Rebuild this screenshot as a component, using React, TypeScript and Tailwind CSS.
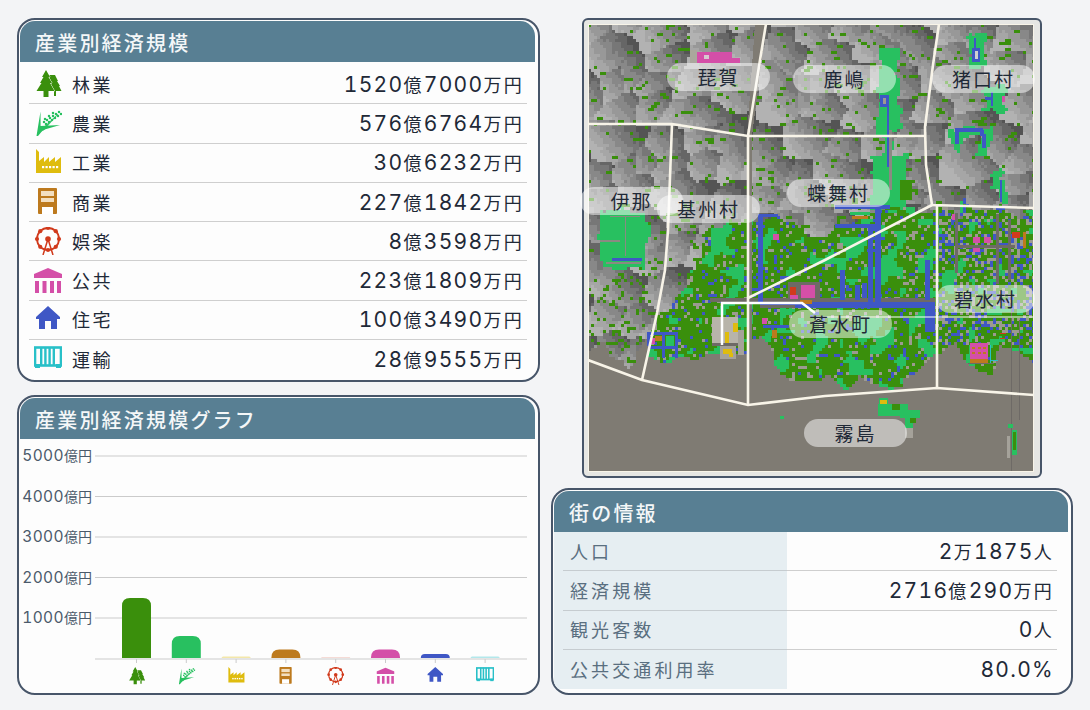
import React, { useMemo } from "react";

const C = {
  green: "#3a8f0c",
  mint: "#28c060",
  yellow: "#dfbc0e",
  brown: "#bd7a1e",
  red: "#d13a1c",
  pink: "#d44fa8",
  blue: "#3f57c5",
  cyan: "#28c0c8",
  taupe: "#7f7b73",
  cream: "#f8f4e8",
};

// all icons are drawn on a 28x28 box
const TreeIcon = () => (
  <>
    <path d="M21 5L24 11H23L26 16H25L27.5 21H22V26H20V21H15V5Z" fill={C.green} />
    <path
      d="M12 0L16 7H14.5L18 13H16L20.5 21H14.5V27H9.5V21H2.5L7.5 13H6L9.5 7H8Z"
      fill={C.green}
      stroke="#fff"
      strokeWidth="1"
      paintOrder="stroke"
    />
  </>
);

const WheatIcon = () => (
  <>
    <path d="M2.5 27L6.5 2.5L6.6 17L26 16L9 21L4 27Z" fill={C.mint} />
    <path d="M5 23L8 20L24 5L10 21Z" fill={C.mint} stroke={C.mint} strokeWidth="0.5" />
    {[
      [10, 13],
      [13, 11],
      [16, 9],
      [19, 7],
      [22, 5],
      [25, 3],
      [12, 15],
      [15, 13],
      [18, 11],
      [21, 9],
      [24, 7],
      [27, 5],
      [11, 10],
      [15, 7],
      [19, 4],
    ].map(([x, y]) => (
      <rect key={`${x}-${y}`} x={x - 1.1} y={y - 1.1} width="2.2" height="2.2" fill={C.mint} />
    ))}
  </>
);

const FactoryIcon = () => (
  <>
    <path d="M2 0L5 3V12L10 8V13L15 8V13L21 8V13L27 8V24H2Z" fill={C.yellow} />
    {[8, 11.5, 15, 18.5, 22].map((x) => (
      <rect key={x} x={x} y="17" width="2.2" height="2.2" fill="#fff" />
    ))}
  </>
);

const ShopIcon = () => (
  <>
    <rect x="4" y="0" width="19" height="26" rx="1" fill={C.brown} />
    <rect x="7" y="3" width="13" height="5" fill="#f3dfc0" />
    <rect x="7" y="10" width="13" height="4" fill="#f3dfc0" />
    <rect x="8" y="19" width="11" height="7" fill="#fff" />
  </>
);

const FerrisIcon = () => (
  <g stroke={C.red} fill={C.red}>
    <circle cx="14" cy="12" r="11" fill="none" strokeWidth="1.8" />
    {[0, 45, 90, 135, 180, 225, 270, 315].map((a) => (
      <circle
        key={a}
        cx={14 + 11 * Math.cos((a * Math.PI) / 180)}
        cy={12 + 11 * Math.sin((a * Math.PI) / 180)}
        r="2.1"
        strokeWidth="0"
      />
    ))}
    <circle cx="14" cy="12" r="2.8" strokeWidth="0" />
    <path d="M14 12L9 28M14 12L19 28" strokeWidth="1.5" fill="none" />
  </g>
);

const CivicIcon = () => (
  <>
    <path d="M14 1L28 7V11H0V7Z" fill={C.pink} />
    {[1, 8.5, 16, 23].map((x) => (
      <rect key={x} x={x} y="14" width="4" height="12" fill={C.pink} />
    ))}
  </>
);

const HouseIcon = () => (
  <path d="M14 0L26 11V13H23V23H17V15H11V23H5V13H2V11Z" fill={C.blue} />
);

const RailIcon = () => (
  <>
    <rect x="1" y="1.5" width="26" height="18" fill="none" stroke={C.cyan} strokeWidth="2.6" />
    {[6, 10.2, 14.4, 18.6].map((x) => (
      <rect key={x} x={x} y="1" width="2.4" height="18" fill={C.cyan} />
    ))}
    <rect x="1" y="18" width="5" height="4" fill={C.cyan} />
    <rect x="22" y="18" width="5" height="4" fill={C.cyan} />
  </>
);

const industries = [
  { name: "林業", value: "1520億7000万円", icon: <TreeIcon />, color: C.green, bar: 60 },
  { name: "農業", value: "576億6764万円", icon: <WheatIcon />, color: C.mint, bar: 22 },
  { name: "工業", value: "30億6232万円", icon: <FactoryIcon />, color: C.yellow, bar: 1.5 },
  { name: "商業", value: "227億1842万円", icon: <ShopIcon />, color: C.brown, bar: 8.5 },
  { name: "娯楽", value: "8億3598万円", icon: <FerrisIcon />, color: C.red, bar: 0.6 },
  { name: "公共", value: "223億1809万円", icon: <CivicIcon />, color: C.pink, bar: 8.5 },
  { name: "住宅", value: "100億3490万円", icon: <HouseIcon />, color: C.blue, bar: 4 },
  { name: "運輸", value: "28億9555万円", icon: <RailIcon />, color: C.cyan, bar: 1.5 },
];

const townInfo = [
  ["人口", "2万1875人"],
  ["経済規模", "2716億290万円"],
  ["観光客数", "0人"],
  ["公共交通利用率", "80.0%"],
];

const labels = [
  { text: "琵賀", left: 83, top: 43 },
  { text: "鹿嶋", left: 209, top: 45 },
  { text: "猪口村", left: 348, top: 45 },
  { text: "伊那", left: -4, top: 167 },
  { text: "基州村", left: 73, top: 175 },
  { text: "蝶舞村", left: 203, top: 159 },
  { text: "碧水村", left: 352, top: 265, width: "w-[99px]" },
  { text: "蒼水町", left: 205, top: 290 },
  { text: "霧島", left: 220, top: 399 },
];

// digits are wider and more open than the kanji around them
const Amount = ({ text }: { text: string }) => (
  <span className="text-[18px] leading-none tracking-[2.3px]">
    {text.split(/([0-9.%]+)/).map((part, i) =>
      i % 2 === 1 ? (
        <span key={i} className="font-['Inter'] text-[21px] tracking-[1.3px] tabular-nums">
          {part}
        </span>
      ) : (
        <span key={i}>{part}</span>
      )
    )}
  </span>
);

const Panel = ({ title, className, children }: { title: string; className: string; children: React.ReactNode }) => (
  <div className={`overflow-hidden rounded-[18px] border-2 border-[#475569] bg-[#fdfdfd] pb-px pl-px pr-[3px] pt-px ${className}`}>
    <div className="h-[41px] rounded-t-[15px] bg-[#587f93] pl-[15px] text-[20px] font-medium leading-[43px] tracking-[2.2px] text-[#f4f7f8]">
      {title}
    </div>
    {children}
  </div>
);

const hash = (x: number, y: number, s = 0) => {
  const v = Math.sin(x * 127.1 + y * 311.7 + s * 74.7) * 43758.5453;
  return v - Math.floor(v);
};

const smooth = (x: number, y: number, size: number, s: number) => {
  const gx = Math.floor(x / size);
  const gy = Math.floor(y / size);
  const fx = x / size - gx;
  const fy = y / size - gy;
  const a = hash(gx, gy, s);
  const b = hash(gx + 1, gy, s);
  const c = hash(gx, gy + 1, s);
  const d = hash(gx + 1, gy + 1, s);
  return (a * (1 - fx) + b * fx) * (1 - fy) + (c * (1 - fx) + d * fx) * fy;
};

const interp = (pts: number[][], x: number) => {
  for (let i = 0; i < pts.length - 1; i++) {
    if (x <= pts[i + 1][0]) {
      const t = (x - pts[i][0]) / (pts[i + 1][0] - pts[i][0]);
      return pts[i][1] + (pts[i + 1][1] - pts[i][1]) * t;
    }
  }
  return pts[pts.length - 1][1];
};

const shorePts = [
  [588, 350], [602, 333], [608, 357], [628, 367], [638, 350], [645, 340], [648, 357], [685, 360],
  [708, 347], [738, 350], [745, 345], [758, 333], [772, 357], [785, 377], [825, 373], [845, 393],
  [858, 377], [888, 390], [905, 377], [935, 353], [955, 340], [965, 363], [992, 370], [998, 343],
  [1021, 353], [1034, 360],
];

const cityPts = [
  [588, 600], [640, 600], [645, 335], [658, 313], [682, 283], [698, 260], [705, 237], [718, 223],
  [745, 215], [752, 217], [775, 210], [808, 237], [830, 230], [870, 210], [900, 207], [932, 207], [1034, 208],
];

const greys = ["#545454", "#666666", "#777777", "#888888", "#989898", "#a6a6a6", "#b2b2b2"];

// hill shading: nearest jittered point, dark above and light below each peak
const hillShade = (x: number, y: number) => {
  const size = 30;
  const sx = x + y * 0.5;
  const gx = Math.floor(sx / size);
  const gy = Math.floor(y / size);
  let best = 1e9;
  let dx = 0;
  let dy = 0;
  for (let i = -1; i <= 1; i++) {
    for (let j = -1; j <= 1; j++) {
      const px = (gx + i + hash(gx + i, gy + j, 1)) * size;
      const py = (gy + j + hash(gx + i, gy + j, 2)) * size;
      const d = (sx - px) ** 2 + (y - py) ** 2;
      if (d < best) {
        best = d;
        dx = sx - px;
        dy = y - py;
      }
    }
  }
  const v = 3.2 + dy * 0.13 - dx * 0.09 + (hash(x, y, 3) - 0.5) * 0.6;
  return greys[Math.max(0, Math.min(6, Math.round(v)))];
};

const blobs: number[][] = [
  // mint areas, x y w h
  [598, 210, 47, 57],
  [968, 32, 17, 33],
  [985, 85, 20, 25],
  [948, 127, 40, 10],
  [948, 127, 12, 25],
  [978, 127, 10, 25],
  [991, 170, 8, 15],
  [998, 178, 9, 24],
  [878, 48, 19, 82],
  [881, 130, 10, 24],
  [870, 154, 35, 53],
];

const MapArt = () => {
  const paths = useMemo(() => {
    const out: Record<string, string> = {};
    const put = (c: string, x: number, y: number) => {
      out[c] = (out[c] || "") + `M${x} ${y}h3v3h-3z`;
    };
    for (let y = 24; y < 472; y += 3) {
      for (let x = 588; x < 1034; x += 3) {
        const r = hash(x, y, 5);
        const wob = (smooth(x, y, 9, 11) - 0.5) * 14;
        const shore = interp(shorePts, x) + wob;
        const top = interp(cityPts, x) + wob * 1.5;
        let c = "";
        if (y >= shore) {
          c = C.taupe;
        } else if (y >= top) {
          const m = smooth(x, y, 10, 7) + (r - 0.5) * 0.06;
          if (x > 932 && y < 345) {
            c = m > 0.7 ? C.mint : r < 0.4 ? C.green : r < 0.64 ? "#9c9a90" : r < 0.84 ? C.blue : C.green;
          } else {
            c = m > 0.66 ? C.mint : r < 0.76 ? C.green : r < 0.88 ? "#9c9a90" : r < 0.97 ? C.blue : C.green;
          }
        } else {
          c = hillShade(x, y);
          const nearShore = x < 650 && y > 270 ? 0.12 : 0;
          if (r < 0.04 + nearShore || hash(x - 3, y, 5) < 0.015) c = C.green;
        }
        const bxj = x + wob * 0.7;
        const byj = y - wob * 0.5;
        if (blobs.some(([bx, by, bw, bh]) => bxj >= bx && bxj < bx + bw && byj >= by && byj < by + bh)) c = C.mint;
        put(c, x, y);
      }
    }
    return out;
  }, []);

  const rects: [number, number, number, number, string][] = [
    // north buildings
    [690, 50, 7, 13, "#aaa79c"],
    [697, 52, 35, 11, C.pink],
    [732, 58, 8, 5, C.pink],
    [704, 55, 5, 4, "#d8c8d0"],
    // north-east towns
    [972, 48, 8, 14, C.blue],
    [975, 51, 3, 8, "#d0d0d0"],
    [974, 38, 2, 10, C.blue],
    [991, 92, 2, 14, C.blue],
    [985, 97, 8, 3, C.blue],
    [1002, 96, 3, 6, C.pink],
    [955, 128, 28, 4, C.blue],
    [955, 128, 4, 16, C.blue],
    [980, 130, 4, 6, C.blue],
    [982, 134, 4, 14, C.blue],
    [1000, 180, 2, 22, C.blue],
    // west valley town
    [610, 216, 30, 1, "#8a8a82"],
    [625, 216, 1, 40, "#8a8a82"],
    [600, 240, 20, 2, "#8a8a82"],
    [612, 258, 30, 3, C.blue],
    [606, 262, 35, 2, "#8a8a82"],
    // central strip
    [880, 95, 9, 12, C.blue],
    [883, 98, 3, 6, "#9c9a90"],
    [887, 107, 2, 60, C.blue],
    [889, 130, 3, 60, "#8a8a82"],
    [900, 180, 12, 20, C.green],
    // core streets
    [710, 298, 225, 4, "#6e6a66"],
    [760, 302, 175, 6, C.blue],
    [875, 205, 6, 97, C.blue],
    [868, 225, 5, 77, C.blue],
    [835, 205, 55, 4, C.blue],
    [835, 224, 40, 4, C.blue],
    [852, 216, 16, 3, C.brown],
    [850, 212, 20, 3, C.mint],
    [758, 214, 5, 90, C.blue],
    [758, 214, 20, 3, C.blue],
    [773, 234, 6, 6, C.pink],
    [925, 260, 5, 40, C.blue],
    [925, 302, 10, 30, C.blue],
    [840, 270, 5, 30, C.blue],
    [855, 285, 5, 15, C.blue],
    [862, 283, 5, 15, C.blue],
    // city hall block
    [788, 282, 32, 20, "#6e6a66"],
    [801, 285, 14, 13, C.pink],
    [790, 287, 6, 8, C.red],
    [790, 295, 8, 4, C.pink],
    [800, 300, 12, 4, C.brown],
    [760, 305, 35, 3, "#6e6a66"],
    [762, 318, 5, 6, C.pink],
    [763, 325, 26, 3, C.blue],
    [772, 330, 5, 8, C.brown],
    // west block
    [647, 332, 31, 3, C.blue],
    [647, 332, 3, 14, C.blue],
    [662, 332, 3, 26, C.blue],
    [675, 332, 3, 26, C.blue],
    [648, 346, 27, 3, C.blue],
    [650, 338, 5, 6, C.pink],
    [655, 336, 7, 5, C.brown],
    [666, 336, 8, 10, C.mint],
    // harbour
    [720, 345, 16, 14, "#a5a29a"],
    [712, 317, 26, 26, "#b8b4aa"],
    [738, 330, 6, 25, "#a5a29a"],
    [712, 343, 26, 3, "#6e6a66"],
    [733, 323, 5, 9, C.yellow],
    [725, 332, 4, 11, C.yellow],
    [723, 349, 9, 5, C.yellow],
    [729, 353, 4, 4, C.yellow],
    // east district
    [952, 214, 6, 6, C.pink],
    [973, 237, 7, 6, C.pink],
    [984, 237, 7, 6, C.pink],
    [973, 247, 7, 5, C.pink],
    [1012, 232, 8, 6, C.red],
    [1023, 232, 3, 16, C.brown],
    [996, 214, 3, 70, "#6e6a66"],
    [955, 213, 3, 60, "#6e6a66"],
    [955, 245, 60, 3, "#6e6a66"],
    [1008, 220, 3, 60, "#6e6a66"],
    [970, 343, 18, 20, C.pink],
    [970, 359, 18, 4, C.brown],
    [972, 347, 3, 2, C.brown],
    [978, 347, 3, 2, C.brown],
    [983, 347, 3, 2, C.brown],
    [972, 352, 3, 2, C.brown],
    [978, 352, 3, 2, C.brown],
    [983, 352, 3, 2, C.brown],
    [968, 363, 26, 1, "#6e6a66"],
    [990, 345, 1, 18, C.cyan],
    [990, 360, 8, 1, C.cyan],
    [1000, 333, 6, 1, C.red],
    [1000, 338, 5, 1, C.red],
    // outlying bits on the flat land
    [1011, 300, 1, 172, "#6e6a66"],
    [1019, 320, 1, 100, "#6e6a66"],
    [879, 398, 9, 6, C.mint],
    [880, 400, 7, 4, C.yellow],
    [878, 404, 30, 12, C.mint],
    [892, 404, 8, 6, C.green],
    [900, 410, 20, 8, C.mint],
    [905, 416, 8, 14, C.mint],
    [910, 418, 6, 5, C.green],
    [905, 428, 8, 10, "#a5a29a"],
    [1008, 424, 5, 4, C.mint],
    [1007, 436, 3, 22, "#a5a29a"],
    [1012, 430, 5, 25, C.mint],
    [1013, 432, 3, 18, C.green],
    [780, 416, 4, 3, C.mint],
  ];

  const boundaries = [
    "766,24 760,60 748,136",
    "588,124 672,124 748,136 925,136",
    "939,24 933,65 925,127 926,165 932,205 1034,208",
    "672,124 668,230 665,270 657,313 642,380",
    "588,360 642,380 748,405 825,396 937,388 1034,395",
    "932,205 825,260 748,298",
  ];

  return (
    <svg viewBox="588 24 446 448" className="block h-[448px] w-[446px]" shapeRendering="crispEdges">
      {Object.entries(paths).map(([c, d]) => (
        <path key={c} d={d} fill={c} />
      ))}
      <path d="M755 24H766L752 136V400H747V136Z" fill={C.taupe} />
      {rects.map(([x, y, w, h, c], i) => (
        <rect key={i} x={x} y={y} width={w} height={h} fill={c} />
      ))}
      <g fill="none" stroke={C.cream} strokeWidth="2.6" shapeRendering="auto">
        {boundaries.map((p) => (
          <polyline key={p} points={p} />
        ))}
        <path d="M748 136V405" />
        <path d="M937 205V388" />
      </g>
      <g fill="none" stroke="#fff" shapeRendering="auto">
        <path d="M722 345V303H802L815 313" strokeWidth="2.5" />
        <path d="M815 317H1034" strokeWidth="1.2" />
      </g>
      <rect x="588" y="24" width="446" height="448" fill="none" stroke={C.cream} strokeWidth="2" />
    </svg>
  );
};

const Chart = () => {
  const grid = [
    { y: 17, label: "5000" },
    { y: 57.5, label: "4000" },
    { y: 98, label: "3000" },
    { y: 138.5, label: "2000" },
    { y: 179, label: "1000" },
  ];
  const base = 220;
  return (
    <svg viewBox="0 0 514 252" className="block h-[252px] w-[514px]">
      {grid.map((g) => (
        <g key={g.y}>
          <line x1="75" x2="507" y1={g.y} y2={g.y} stroke="#cbcbcb" strokeWidth="1.2" />
          <text x="72" y={g.y + 5} textAnchor="end" fontSize="14" fill="#4b5a6b">
            <tspan fontFamily="Inter" fontSize="15.5" letterSpacing="0.4" style={{ fontVariantNumeric: "tabular-nums" }}>
              {g.label}
            </tspan>
            億円
          </text>
        </g>
      ))}
      {industries.map((d, i) => {
        const cx = 116.5 + i * 49.8;
        const r = Math.min(8, d.bar);
        return (
          <g key={d.name}>
            <path
              d={`M${cx - 14.5} ${base - 1}v${-(d.bar - r)}q0 ${-r} ${r} ${-r}h${29 - 2 * r}q${r} 0 ${r} ${r}v${d.bar - r}z`}
              fill={d.color}
              opacity={d.bar < 2 ? 0.35 : 1}
            />
            <line x1={cx} x2={cx} y1={base} y2={base + 4} stroke="#cbcbcb" strokeWidth="1" />
            <svg x={cx - 9} y={228} width="18" height="18" viewBox="0 0 28 28">
              {d.icon}
            </svg>
          </g>
        );
      })}
      <line x1="75" x2="507" y1={base} y2={base} stroke="#cbcbcb" strokeWidth="1.2" />
    </svg>
  );
};

const App = () => {
  return (
    <div className="flex h-[710px] w-[1090px] gap-[11px] overflow-hidden bg-[#f3f4f6] pl-[17px] pt-[18px] font-['Noto_Sans_CJK_JP',sans-serif] text-[#1f2937]">
      <div className="flex w-[523px] flex-col gap-[13px]">
        <Panel title="産業別経済規模" className="h-[364px]">
          <div className="pl-[9px] pr-[8px] pt-[3px]">
            {industries.map((d, i) => (
              <div
                key={d.name}
                className={`flex h-[39.3px] items-center pr-[3px] text-[18px] ${i < 7 ? "border-b border-[#cfcfcf]" : ""}`}
              >
                <svg viewBox="0 0 28 28" className="ml-[5px] mr-[10px] h-[28px] w-[28px] shrink-0">
                  {d.icon}
                </svg>
                <span className="tracking-[2.4px]">{d.name}</span>
                <span className="ml-auto">
                  <Amount text={d.value} />
                </span>
              </div>
            ))}
          </div>
        </Panel>
        <Panel title="産業別経済規模グラフ" className="h-[300px]">
          <Chart />
        </Panel>
      </div>
      <div className="flex w-[522px] flex-col items-center gap-[10px]">
        <div className="relative h-[460px] w-[460px] rounded-md border-2 border-[#475569] bg-[#e6e6e3] p-[4px]">
          <MapArt />
          {labels.map((l) => (
            <div
              key={l.text}
              style={{ left: l.left, top: l.top }}
              className={`absolute flex h-[28px] ${l.width || "w-[103px]"} items-center justify-center rounded-[14px] bg-white/50 text-[19px] tracking-[2px] text-[#1f2937]`}
            >
              {l.text}
            </div>
          ))}
        </div>
        <Panel title="街の情報" className="h-[207px] w-[522px]">
          <div className="pb-[3px]">
            {townInfo.map(([k, v], i) => (
              <div key={k} className="flex h-[39.3px] text-[18px]">
                <div className="w-[233px] shrink-0 bg-[#e6eef2] pl-[9px]">
                  <div
                    className={`flex h-full items-center pl-[7px] tracking-[3.1px] text-[#5a6f80] ${
                      i < 3 ? "border-b border-[#c6ccd0]" : ""
                    }`}
                  >
                    {k}
                  </div>
                </div>
                <div className="flex-1 pr-[11px]">
                  <div className={`flex h-full items-center justify-end pr-[3px] ${i < 3 ? "border-b border-[#cfcfcf]" : ""}`}>
                    <Amount text={v} />
                  </div>
                </div>
              </div>
            ))}
          </div>
        </Panel>
      </div>
    </div>
  );
};

export default App;
